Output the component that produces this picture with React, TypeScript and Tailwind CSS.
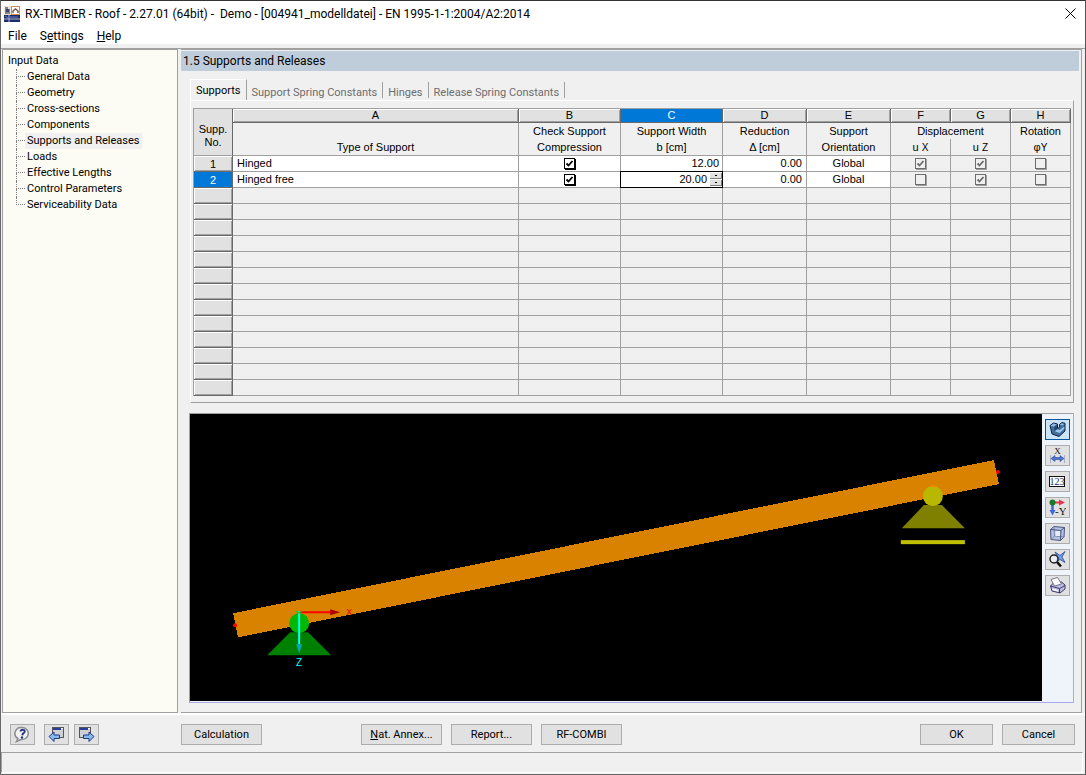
import React, { useState } from 'react';

interface SupportRow {
  name: string;
  check: boolean;
  width: string;
  reduction: string;
  orientation: string;
  ux: boolean;
  uz: boolean;
  phi: boolean;
}

const treeItems = [
  'General Data',
  'Geometry',
  'Cross-sections',
  'Components',
  'Supports and Releases',
  'Loads',
  'Effective Lengths',
  'Control Parameters',
  'Serviceability Data',
];

const tabs = ['Supports', 'Support Spring Constants', 'Hinges', 'Release Spring Constants'];

const initialRows: SupportRow[] = [
  { name: 'Hinged', check: true, width: '12.00', reduction: '0.00', orientation: 'Global', ux: true, uz: true, phi: false },
  { name: 'Hinged free', check: true, width: '20.00', reduction: '0.00', orientation: 'Global', ux: false, uz: true, phi: false },
];

const EMPTY_ROWS = 13;

const AppIcon = () => (
  <svg width="16" height="16" viewBox="0 0 16 16" aria-hidden="true">
    <rect width="16" height="16" fill="#e9e4dc" />
    <path d="M1 1h3v2h2v5H1z" fill="#8a8378" />
    <path d="M2 3h3v3H2z" fill="#3a4668" />
    <rect x="7.5" y=".5" width="8" height="8" fill="#fff" stroke="#d98a4a" />
    <path d="M9 7V5l2.500-2L14 5v2" fill="none" stroke="#7a5b48" strokeWidth="1.500" />
    <rect y="9" width="16" height="7" fill="#1c2b66" />
    <path d="M0 13h16M5 9v7" stroke="#aeb8dc" strokeWidth="1" />
    <path d="M1 10l3 2M6 11h8" stroke="#6d7db8" strokeWidth="1" />
  </svg>
);

const HelpIcon = () => (
  <svg width="17" height="17" viewBox="0 0 17 17" aria-hidden="true">
    <path d="M8.500 1.500a6.500 6 0 1 1-1.500 12L2.500 15.500l1.500-3A6.500 6 0 0 1 8.500 1.500z" fill="#f2f2f4" stroke="#8c8c92" strokeWidth="1.500" />
    <path d="M6.500 5.500c.3-2.300 4.500-2.200 4.200.1-.2 1.500-2.200 1.600-2.400 3.700" fill="none" stroke="#24357e" strokeWidth="1.900" />
    <circle cx="8" cy="11.500" r="1.200" fill="#24357e" />
  </svg>
);

const PrevIcon = () => (
  <svg width="17" height="17" viewBox="0 0 17 17" aria-hidden="true">
    <rect x="4.500" y="1.500" width="11" height="10" fill="#cfcfd4" stroke="#55555c" />
    <path d="M5 3h8" stroke="#2a3f9c" strokeWidth="2" />
    <path d="M13 2.500h2" stroke="#fff" />
    <path d="M1 10.500l5-4.500v3h5.500v3.500H6v3z" fill="#8ab8f0" stroke="#1e3a80" strokeLinejoin="round" />
  </svg>
);

const NextIcon = () => (
  <svg width="17" height="17" viewBox="0 0 17 17" aria-hidden="true">
    <rect x="1.500" y="1.500" width="11" height="10" fill="#cfcfd4" stroke="#55555c" />
    <path d="M2 3h8" stroke="#2a3f9c" strokeWidth="2" />
    <path d="M10 2.500h2" stroke="#fff" />
    <path d="M16 10.500l-5-4.500v3H5.500v3.500H11v3z" fill="#8ab8f0" stroke="#1e3a80" strokeLinejoin="round" />
  </svg>
);

const SolidIcon = () => (
  <svg width="17" height="17" viewBox="0 0 17 17" aria-hidden="true">
    <path d="M1 4.500L4.500 2l4 1v4.500l2-1.200V3.500l2.500-2 3 .8V10L10 15.500 3 13z" fill="#3f6f9f" stroke="#13243d" strokeLinejoin="round" />
    <path d="M1.500 4.700l3-2.200 3.500.9L5 5.800z" fill="#8fb9de" />
    <path d="M5 5.800L8.200 3.500v4.500L5.600 10z" fill="#29496c" />
    <path d="M5.800 10.300l2.700-2 2.300.8 4.500-3.600v2.300L10.500 12z" fill="#9cc6ec" />
    <path d="M10.800 3.800l2-1.600 2.600.7-1.900 1.700z" fill="#8fb9de" />
  </svg>
);

const DimensionIcon = () => (
  <svg width="17" height="17" viewBox="0 0 17 17" aria-hidden="true">
    <text x="8.500" y="6.500" textAnchor="middle" fontSize="9" fontFamily="Liberation Serif, serif" fill="#111">X</text>
    <path d="M1.500 8v8M15.500 8v8" stroke="#a8aec4" />
    <path d="M2 11.500l4-3v2h5v-2l4 3-4 3v-2H6v2z" fill="#4a74d0" stroke="#34508e" strokeWidth=".6" />
  </svg>
);

const NumberIcon = () => (
  <svg width="17" height="17" viewBox="0 0 17 17" aria-hidden="true">
    <rect x=".5" y="3.500" width="15" height="10" fill="#fff" stroke="#111" />
    <text x="8" y="12" textAnchor="middle" fontSize="10" fontFamily="Liberation Serif, serif" fill="#1a2a60">123</text>
  </svg>
);

const AxisIcon = () => (
  <svg width="17" height="17" viewBox="0 0 17 17" aria-hidden="true">
    <path d="M5 3.500h6" stroke="#e0364a" strokeWidth="2" />
    <path d="M10 .500l6 3-6 3z" fill="#e0364a" />
    <path d="M3.500 5v7" stroke="#3d6ad8" strokeWidth="2.500" />
    <path d="M.5 11h6l-3 5.500z" fill="#3d6ad8" />
    <circle cx="3.500" cy="3.500" r="3" fill="#1a7a2c" />
    <text x="6" y="15.500" fontSize="11" fontFamily="Liberation Serif, serif" fill="#111">-Y</text>
  </svg>
);

const BoxIcon = () => (
  <svg width="17" height="17" viewBox="0 0 17 17" aria-hidden="true">
    <path d="M1.500 4.500l3.500-3 10.500 1-.5 9.500-3.500 3.500-9.500-1z" fill="#b7c2e4" stroke="#4a5580" strokeLinejoin="round" />
    <path d="M5 1.500L5.500 11l10 1M5.500 11L2 14.500" fill="none" stroke="#7d88ae" />
    <path d="M1.500 4.500l10.500 1-.5 10M12 5.500l3.500-3" fill="none" stroke="#4a5580" />
    <path d="M6.500 6h4.500v5h-4.500z" fill="#e6ecfa" />
  </svg>
);

const ZoomIcon = () => (
  <svg width="17" height="17" viewBox="0 0 17 17" aria-hidden="true">
    <path d="M6 1l5 3.500 5-4-3 5.500 3 5.500-5-3-5 3.500 3-5.500z" fill="#6f9de8" stroke="#2c4a94" strokeWidth=".8" />
    <circle cx="5" cy="8" r="4" fill="#eef2f8" fillOpacity=".8" stroke="#222" strokeWidth="1.500" />
    <path d="M8 11l4 4.500" stroke="#111" strokeWidth="2.600" />
  </svg>
);

const PrinterIcon = () => (
  <svg width="17" height="17" viewBox="0 0 17 17" aria-hidden="true">
    <path d="M1.500 9l3-3 8-1 3.500 3v4l-5 4L3 14z" fill="#bdbde4" stroke="#3c3c66" strokeLinejoin="round" />
    <path d="M1.500 9l9 2.500 5.500-3M10.500 11.500V16" fill="none" stroke="#3c3c66" />
    <path d="M2 2.500L8.500.500l4 6.500-7 2z" fill="#fff" stroke="#5a5a70" strokeWidth=".8" />
    <path d="M3.500 11.500l5.500 1.500v1.500l-5.500-1.500z" fill="#fff" />
  </svg>
);

const tools = [
  { label: 'Solid model', icon: SolidIcon },
  { label: 'Dimensions', icon: DimensionIcon },
  { label: 'Numbering', icon: NumberIcon },
  { label: 'View against Y', icon: AxisIcon },
  { label: 'Isometric view', icon: BoxIcon },
  { label: 'Zoom all', icon: ZoomIcon },
  { label: 'Print', icon: PrinterIcon },
];

interface CheckProps {
  label: string;
  checked: boolean;
  locked?: boolean;
  onChange?: () => void;
}

const Check: React.FC<CheckProps> = ({ label, checked, locked, onChange }) => (
  <span className="grid place-items-center">
    <input
      type="checkbox"
      aria-label={label}
      checked={checked}
      disabled={locked}
      onChange={() => onChange?.()}
      className={`col-start-1 row-start-1 size-[11px] appearance-none border ${
        locked ? 'border-[#6d6d6d] bg-[#f0f0f0] shadow-[1px_1px_0_#a0a0a0]' : 'border-black bg-white shadow-[1px_1px_0_#000]'
      }`}
    />
    {checked && (
      <svg width="11" height="11" viewBox="0 0 11 11" aria-hidden="true" className="pointer-events-none col-start-1 row-start-1">
        <path d="M2.500 5.500L4.500 7.500L8.500 3" fill="none" stroke={locked ? '#6d6d6d' : '#000'} strokeWidth="1.800" />
      </svg>
    )}
  </span>
);

const BeamView = () => (
  <svg viewBox="0 0 851 287" className="h-full w-full" role="img" aria-label="Roof beam with two supports">
    <polygon points="43,199 803,46 808,70 48,223" fill="#d98200" shapeRendering="crispEdges" />
    <circle cx="45" cy="211" r="2" fill="#f00" />
    <circle cx="807" cy="58" r="2" fill="#f00" />
    <polygon points="100,218 118,218 141,241 77,241" fill="#008000" />
    <circle cx="109" cy="209" r="10" fill="#00b800" />
    <path d="M109 198h32" stroke="#f00" strokeWidth="2" />
    <polygon points="140,195 150,198 140,201" fill="#b00000" />
    <path d="M109 197v33" stroke="#0ff" strokeWidth="2" />
    <polygon points="106,230 112,230 109,239" fill="#00a8b8" />
    <path d="M106 197l3 2 3-2" fill="none" stroke="#0c0" />
    <text x="159" y="201" textAnchor="middle" fontSize="9" fontFamily="Liberation Sans, sans-serif" fill="#e00000">X</text>
    <text x="109" y="252" textAnchor="middle" fontSize="10" fontFamily="Liberation Sans, sans-serif" fill="#0ff">Z</text>
    <polygon points="733,91 751,91 774,114 711,114" fill="#808000" />
    <circle cx="742" cy="82" r="10" fill="#b8b800" />
    <path d="M740 72h4" stroke="#ff8000" strokeWidth="2" />
    <rect x="710" y="126" width="64" height="4" fill="#c0c000" />
  </svg>
);

const pushButton = 'h-[21px] border border-[#adadad] bg-[#e1e1e1] text-center';
const iconButton = 'flex h-[21px] w-[25px] shrink-0 items-center justify-center border';
const letterCell = 'h-[14px] border-r border-b border-[#696969] bg-[#e1e1e1] p-0 font-normal leading-[13px] shadow-[inset_1px_1px_0_#fff,inset_-1px_-1px_0_#a0a0a0]';
const labelCell = 'h-4 border-r border-[#a0a0a0] p-0 font-normal leading-[15px]';
const lastLabelCell = 'h-[17px] border-r border-b border-[#a0a0a0] p-0 font-normal leading-[15px]';
const bodyCell = 'h-4 border-r border-b border-[#a0a0a0] p-0 leading-[15px]';
const rowHead = 'h-4 border-r border-b border-[#696969] p-0 text-center font-normal leading-[14px]';
const raisedHead = 'bg-[#e1e1e1] shadow-[inset_1px_1px_0_#fff,inset_-1px_-1px_0_#a0a0a0]';

const App: React.FC = () => {
  const [rows, setRows] = useState(initialRows);
  const [activeTab, setActiveTab] = useState(0);
  const [selected, setSelected] = useState(1);
  const [activeTool, setActiveTool] = useState(0);

  const update = (index: number, patch: Partial<SupportRow>) => {
    setRows(prev => prev.map((row, i) => (i === index ? { ...row, ...patch } : row)));
  };

  const step = (index: number, delta: number) => {
    update(index, { width: (Number(rows[index].width) + delta).toFixed(2) });
  };

  return (
    <div className="flex min-h-screen flex-col border border-t-[#333] border-r-[#555] border-b-[#696969] border-l-[#696969] bg-[#f0f0f0] font-[Roboto,sans-serif] text-[11px] text-black">
      <header className="bg-white">
        <div className="flex h-[25px] items-center gap-1 pr-[5px] pl-[3px] text-[12px]">
          <AppIcon />
          <h1 className="flex-1 pl-px whitespace-pre">RX-TIMBER - Roof - 2.27.01 (64bit) -  Demo - [004941_modelldatei] - EN 1995-1-1:2004/A2:2014</h1>
          <button type="button" aria-label="Close" className="p-1">
            <svg width="11" height="11" viewBox="0 0 11 11" aria-hidden="true">
              <path d="M.5.5l10 10M10.500.5l-10 10" stroke="#000" />
            </svg>
          </button>
        </div>
        <nav className="flex h-[18px] items-center gap-[13px] pt-px pl-[7px] text-[12px]">
          <button type="button">File</button>
          <button type="button">S<u>e</u>ttings</button>
          <button type="button"><u>H</u>elp</button>
        </nav>
      </header>

      <main className="mt-1 flex flex-1 border-t border-[#a0a0a0]">
        <aside className="mr-[3px] ml-px w-[176px] shrink-0 border border-[#a0a0a0] bg-[#fcfcf4] pt-[3px] pl-[5px]">
          <div className="leading-4">Input Data</div>
          <ul className="pl-2">
            {treeItems.map((item, i) => (
              <li key={item} className="flex h-4 items-center">
                <span className="flex h-full w-[9px] flex-col">
                  <span className="h-2 border-b border-l border-dotted border-[#808080]" />
                  {i < treeItems.length - 1 && <span className="h-2 border-l border-dotted border-[#808080]" />}
                </span>
                <button type="button" className={`h-4 px-[2px] leading-4 ${item === 'Supports and Releases' ? 'bg-[#f0f0f0]' : ''}`}>
                  {item}
                </button>
              </li>
            ))}
          </ul>
        </aside>

        <section className="mr-[3px] flex min-w-0 flex-1 flex-col border-t border-r border-b border-[#a0a0a0] pr-[2px]">
          <h2 className="mt-px h-5 bg-[#bfcddb] pl-[2px] text-[12px] leading-5">1.5 Supports and Releases</h2>

          <div className="mt-2 mr-[5px] ml-[9px] flex h-[21px] items-end" role="tablist">
            {tabs.map((tab, i) => (
              <button
                key={tab}
                type="button"
                role="tab"
                aria-selected={i === activeTab}
                onClick={() => setActiveTab(i)}
                className={
                  i === activeTab
                    ? 'h-[21px] border-t border-r border-l border-t-white border-r-[#a0a0a0] border-l-white px-[5px] pt-[3px] text-black'
                    : 'mb-[2px] h-4 border-r border-[#a0a0a0] px-[5px] pt-[2px] leading-[18px] text-[#6d6d6d]'
                }
              >
                {tab}
              </button>
            ))}
          </div>

          <div className="mr-[5px] ml-[9px] border border-t-white border-r-[#a0a0a0] border-b-[#a0a0a0] border-l-white px-[2px] pt-[7px] pb-[6px]">
            <table className="w-full table-fixed border-separate border-spacing-0 border-t border-l border-[#a0a0a0] font-['Liberation_Sans',sans-serif] text-[11px]">
              <colgroup>
                <col className="w-[39px]" />
                <col />
                <col className="w-[102px]" />
                <col className="w-[102px]" />
                <col className="w-[84px]" />
                <col className="w-[84px]" />
                <col className="w-[60px]" />
                <col className="w-[60px]" />
                <col className="w-[60px]" />
              </colgroup>
              <thead>
                <tr>
                  <th rowSpan={3} className="border-r border-b border-r-[#696969] border-b-[#a0a0a0] bg-[#e1e1e1] p-0 pt-2 font-normal leading-[13px]">
                    Supp.<br />No.
                  </th>
                  {['A', 'B', 'C', 'D', 'E', 'F', 'G', 'H'].map(letter => (
                    <th
                      key={letter}
                      className={
                        letter === 'C'
                          ? 'h-[14px] border-r border-b border-[#696969] bg-[#0078d7] p-0 font-normal leading-[13px] text-white'
                          : letterCell
                      }
                    >
                      {letter}
                    </th>
                  ))}
                </tr>
                <tr>
                  <th className={labelCell} />
                  <th className={labelCell}>Check Support</th>
                  <th className={labelCell}>Support Width</th>
                  <th className={labelCell}>Reduction</th>
                  <th className={labelCell}>Support</th>
                  <th colSpan={2} className={labelCell}>Displacement</th>
                  <th className={labelCell}>Rotation</th>
                </tr>
                <tr>
                  <th className={lastLabelCell}>Type of Support</th>
                  <th className={lastLabelCell}>Compression</th>
                  <th className={lastLabelCell}>b [cm]</th>
                  <th className={lastLabelCell}>Δ [cm]</th>
                  <th className={lastLabelCell}>Orientation</th>
                  <th className={lastLabelCell}>u <span className="text-[10px]">X</span></th>
                  <th className={lastLabelCell}>u <span className="text-[10px]">Z</span></th>
                  <th className={lastLabelCell}>φ<span className="text-[10px]">Y</span></th>
                </tr>
              </thead>
              <tbody>
                {rows.map((row, i) => (
                  <tr key={row.name} onClick={() => setSelected(i)}>
                    <th className={`${rowHead} ${i === selected ? 'bg-[#0078d7] text-white' : raisedHead}`}>{i + 1}</th>
                    <td className={`${bodyCell} bg-white pl-1`}>{row.name}</td>
                    <td className={`${bodyCell} bg-white`}>
                      <Check label={`Check support compression ${i + 1}`} checked={row.check} onChange={() => update(i, { check: !row.check })} />
                    </td>
                    <td className={`${bodyCell} bg-white`}>
                      <div className={`flex h-[15px] items-center ${i === selected ? 'outline outline-black' : ''}`}>
                        <input
                          aria-label={`Support width ${i + 1}`}
                          value={row.width}
                          onChange={e => update(i, { width: e.target.value })}
                          className="h-[15px] w-full min-w-0 flex-1 bg-transparent pr-[3px] text-right outline-none"
                        />
                        {i === selected && (
                          <span className="flex w-3 flex-col">
                            <button type="button" aria-label="Increase" onClick={() => step(i, 1)} className="flex h-[6px] items-center justify-center border-r border-b border-[#808080] bg-[#e1e1e1]">
                              <span className="h-px w-[2px] bg-black" />
                            </button>
                            <button type="button" aria-label="Decrease" onClick={() => step(i, -1)} className="mt-px flex h-[6px] items-center justify-center border-r border-b border-[#808080] bg-[#e1e1e1]">
                              <span className="h-px w-[2px] bg-black" />
                            </button>
                          </span>
                        )}
                      </div>
                    </td>
                    <td className={`${bodyCell} bg-white pr-1 text-right`}>{row.reduction}</td>
                    <td className={`${bodyCell} bg-white text-center`}>{row.orientation}</td>
                    <td className={bodyCell}><Check label={`Displacement uX ${i + 1}`} checked={row.ux} locked /></td>
                    <td className={bodyCell}><Check label={`Displacement uZ ${i + 1}`} checked={row.uz} locked /></td>
                    <td className={bodyCell}><Check label={`Rotation φY ${i + 1}`} checked={row.phi} locked /></td>
                  </tr>
                ))}
                {[...Array(EMPTY_ROWS)].map((_, i) => (
                  <tr key={i}>
                    <th className={`${rowHead} ${raisedHead}`} />
                    {[...Array(8)].map((_, c) => (
                      <td key={c} className={bodyCell} />
                    ))}
                  </tr>
                ))}
              </tbody>
            </table>
          </div>

          <div className="mt-[10px] mr-[5px] mb-[9px] ml-2 flex flex-1 border border-t-[#a0a0a0] border-r-[#aaaaea] border-b-[#aaaaea] border-l-[#a0a0a0]">
            <div className="mb-px min-w-0 flex-1 bg-black">
              <BeamView />
            </div>
            <div className="flex w-[31px] shrink-0 flex-col items-center gap-[5px] bg-[#eff3fa] pt-[5px]">
              {tools.map(({ label, icon: Icon }, i) => (
                <button
                  key={label}
                  type="button"
                  aria-label={label}
                  aria-pressed={i === activeTool}
                  onClick={() => setActiveTool(i)}
                  className={`${iconButton} ${i === activeTool ? 'border-[#00559b] bg-[#cce4f7]' : 'border-[#adadad] bg-[#e1e1e1]'}`}
                >
                  <Icon />
                </button>
              ))}
            </div>
          </div>
        </section>
      </main>

      <footer>
        <div className="flex border-t-2 border-white pt-[9px] pr-[10px] pb-[7px] pl-[9px]">
          <div className="flex w-[171px] shrink-0">
            <button type="button" aria-label="Help" className={`${iconButton} mr-[9px] border-[#adadad] bg-[#e1e1e1]`}><HelpIcon /></button>
            <button type="button" aria-label="Previous" className={`${iconButton} mr-[5px] border-[#adadad] bg-[#e1e1e1]`}><PrevIcon /></button>
            <button type="button" aria-label="Next" className={`${iconButton} border-[#adadad] bg-[#e1e1e1]`}><NextIcon /></button>
          </div>
          <button type="button" className={`${pushButton} w-[81px]`}>Calculation</button>
          <div className="ml-[99px] flex flex-1 gap-[9px]">
            <button type="button" className={`${pushButton} w-[81px]`}><u>N</u>at. Annex...</button>
            <button type="button" className={`${pushButton} w-[81px]`}>Report...</button>
            <button type="button" className={`${pushButton} w-[81px]`}>RF-COMBI</button>
          </div>
          <div className="flex gap-[9px]">
            <button type="button" className={`${pushButton} w-[73px]`}>OK</button>
            <button type="button" className={`${pushButton} w-[73px]`}>Cancel</button>
          </div>
        </div>
        <div className="mr-[2px] mb-px h-[21px] border border-t-[#a0a0a0] border-r-white border-b-white border-l-[#a0a0a0]" role="status" />
      </footer>
    </div>
  );
};

export default App;
